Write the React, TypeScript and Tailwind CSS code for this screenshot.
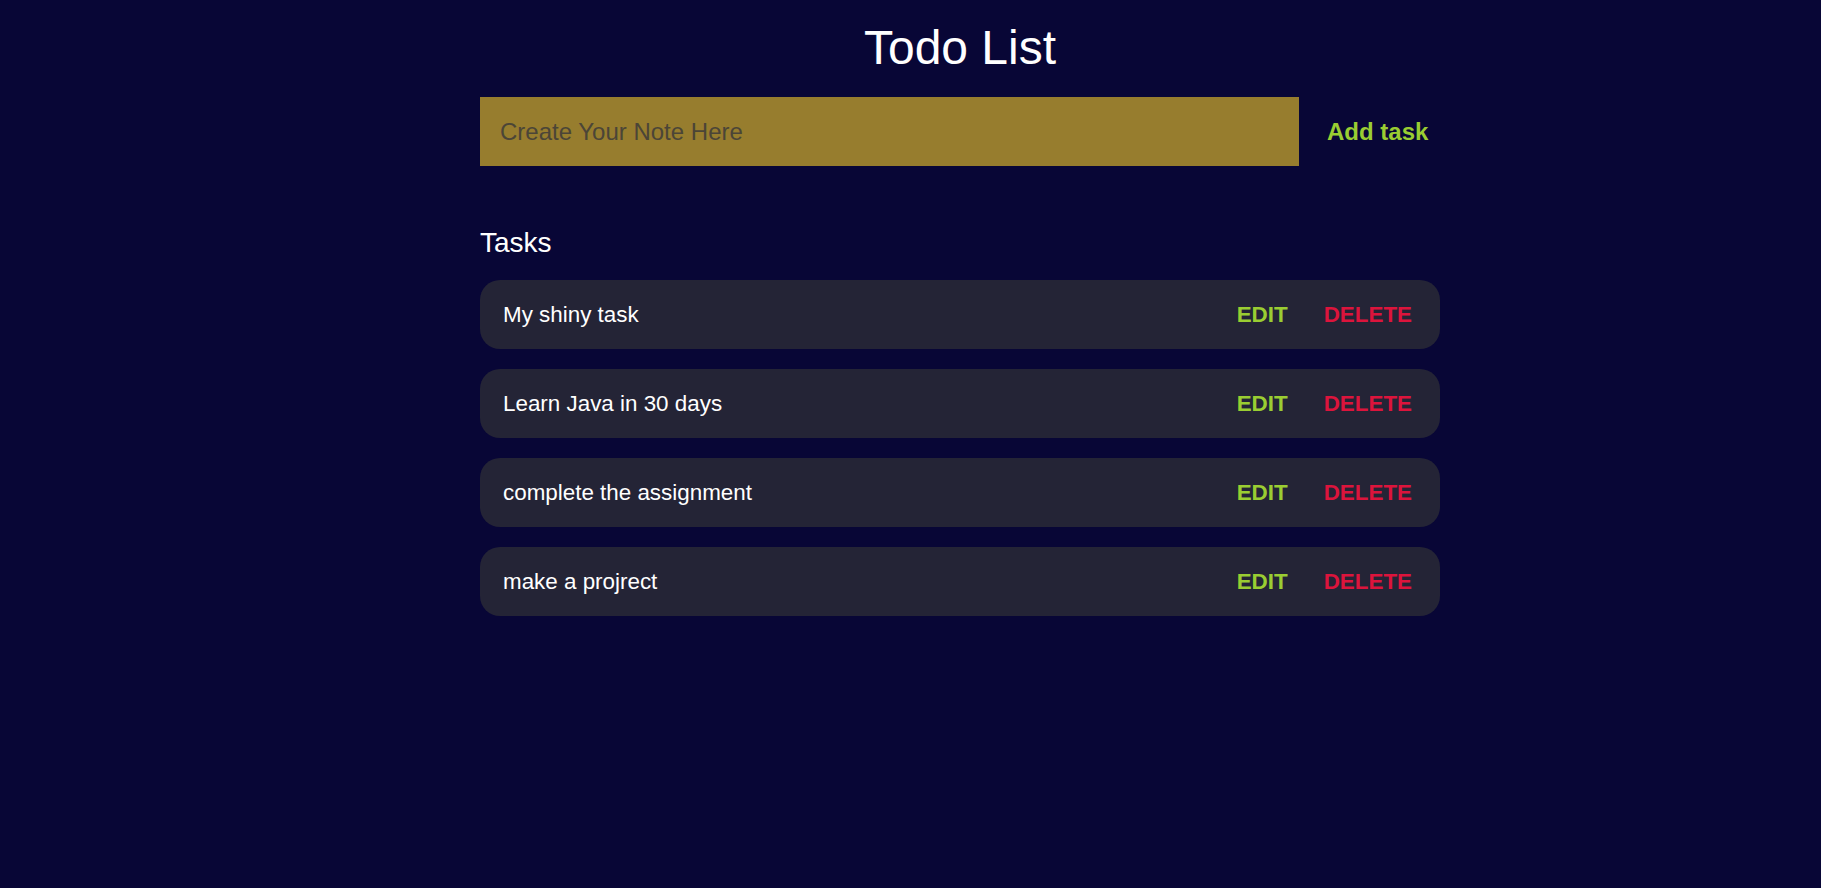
import React from "react";

const tasks = [
  "My shiny task",
  "Learn Java in 30 days",
  "complete the assignment",
  "make a projrect",
];

export default function App() {
  return (
    <div
      className="min-h-screen w-full bg-[#080636] text-white"
      style={{ fontFamily: '"Liberation Sans", Arial, sans-serif' }}
    >
      <div className="ml-[480px] w-[960px] pt-[21px]">
        <h1 className="text-center text-[48px] leading-[54px] font-normal text-white">
          Todo List
        </h1>
        <div className="mt-[22px] flex items-center">
          <input
            type="text"
            placeholder="Create Your Note Here"
            className="h-[69px] w-[819px] bg-[#977d2e] pl-[20px] text-[24px] text-[#2d2a25] outline-none placeholder:text-[#4b4537]"
          />
          <button className="ml-[28px] text-[24px] font-bold text-[#9acd32]">
            Add task
          </button>
        </div>
        <h2 className="mt-[61px] text-[28px] leading-[32px] font-normal text-white">
          Tasks
        </h2>
        <div className="mt-[21px] flex flex-col gap-[20px]">
          {tasks.map((t) => (
            <div
              key={t}
              className="flex h-[69px] items-center justify-between rounded-[20px] bg-[#242436] pl-[23px] pr-[28px] text-[22.4px]"
            >
              <span className="text-white">{t}</span>
              <div className="flex items-center gap-[36px] font-bold">
                <button className="text-[#9acd32]">EDIT</button>
                <button className="text-[#dc143c]">DELETE</button>
              </div>
            </div>
          ))}
        </div>
      </div>
    </div>
  );
}
